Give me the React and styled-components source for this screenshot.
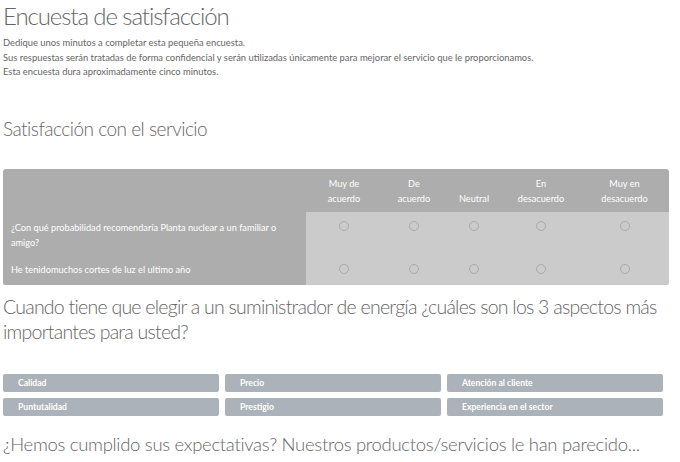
import React from "react";
import styled, { createGlobalStyle } from "styled-components";

const Global = createGlobalStyle`
  html, body { margin: 0; padding: 0; background: #fff; }
  body { font-family: Lato, "Open Sans", sans-serif; color: #666; }
`;

const Page = styled.div`
  padding: 0 3px;
  width: 666px;
`;

const Title = styled.h1`
  margin: 0;
  padding-top: 2px;
  font-family: Lato, sans-serif;
  font-weight: 300;
  font-size: 24px;
  letter-spacing: -1.1px;
  line-height: 28px;
  color: #666;
`;

const Intro = styled.div`
  margin-top: 6px;
  font-size: 9.4px;
  line-height: 14.5px;
  color: #666;
`;

const SectionTitle = styled.h2`
  margin: 0;
  margin-top: ${(p) => p.$top || 0}px;
  font-family: Lato, sans-serif;
  font-weight: 300;
  font-size: ${(p) => p.$size || 20}px;
  letter-spacing: ${(p) => p.$ls || 0}px;
  line-height: 25px;
  color: #666;
`;

const Table = styled.table`
  margin-top: 28px;
  width: 666px;
  table-layout: fixed;
  border-collapse: separate;
  border-spacing: 0;
  background: #adadad;
  border-radius: 3px;
  overflow: hidden;
  font-size: 9.2px;
  color: #fff;
`;

const HeadCell = styled.th`
  font-weight: 400;
  line-height: 15px;
  padding: 6px 2px;
  height: 31px;
  text-align: center;
  vertical-align: bottom;
`;

const LabelCell = styled.td`
  text-align: left;
  padding: ${(p) => p.$pad || "6px 8px"};
  line-height: 15px;
  background: #adadad;
  vertical-align: top;
`;

const RadioCell = styled.td`
  background: #cbcbcb;
  text-align: center;
  vertical-align: top;
  padding: ${(p) => p.$pad || "9px 0"};
`;

const Radio = styled.span`
  display: inline-block;
  width: 10px;
  height: 10px;
  border: 1px solid #aaa;
  border-radius: 50%;
  box-sizing: border-box;
  vertical-align: top;
`;

const Options = styled.div`
  margin-top: 30px;
  display: grid;
  grid-template-columns: repeat(3, 216px);
  column-gap: 6px;
  row-gap: 6px;
`;

const Option = styled.div`
  height: 18px;
  background: #abb2b9;
  border-radius: 2px;
  color: #fff;
  font-weight: 700;
  font-size: 8.6px;
  line-height: 18px;
  padding-left: 15px;
`;

const labelWidth = 303;

const cols = [
  { l: ["Muy de", "acuerdo"], w: 76 },
  { l: ["De", "acuerdo"], w: 64 },
  { l: ["Neutral"], w: 56 },
  { l: ["En", "desacuerdo"], w: 78 },
  { l: ["Muy en", "desacuerdo"], w: 89 },
];

const rows = [
  { q: "¿Con qué probabilidad recomendaría Planta nuclear a un familiar o amigo?", pad: "8px 8px 6px", rpad: "9px 0 24px" },
  { q: "He tenidomuchos cortes de luz el ultimo año", pad: "6px 8px 8px", rpad: "8px 0 10px" },
];

const opts = [
  "Calidad",
  "Precio",
  "Atención al cliente",
  "Puntutalidad",
  "Prestigio",
  "Experiencia en el sector",
];

export default function App() {
  return (
    <>
      <Global />
      <Page>
        <Title>Encuesta de satisfacción</Title>
        <Intro>
          Dedique unos minutos a completar esta pequeña encuesta.
          <br />
          Sus respuestas serán tratadas de forma confidencial y serán utilizadas únicamente para mejorar el servicio que le proporcionamos.
          <br />
          Esta encuesta dura aproximadamente cinco minutos.
        </Intro>
        <SectionTitle $top={36} $size={19} $ls={-0.5}>Satisfacción con el servicio</SectionTitle>
        <Table>
          <colgroup>
            <col style={{ width: labelWidth }} />
            {cols.map((c, i) => (
              <col key={i} style={{ width: c.w }} />
            ))}
          </colgroup>
          <thead>
            <tr>
              <HeadCell />
              {cols.map((c, i) => (
                <HeadCell key={i}>
                  {c.l.map((t, j) => (
                    <React.Fragment key={j}>
                      {j > 0 && <br />}
                      {t}
                    </React.Fragment>
                  ))}
                </HeadCell>
              ))}
            </tr>
          </thead>
          <tbody>
            {rows.map((r, i) => (
              <tr key={i}>
                <LabelCell $pad={r.pad}>{r.q}</LabelCell>
                {cols.map((c, j) => (
                  <RadioCell key={j} $pad={r.rpad}>
                    <Radio />
                  </RadioCell>
                ))}
              </tr>
            ))}
          </tbody>
        </Table>
        <SectionTitle $top={9} $size={19.5} $ls={-0.75}>
          Cuando tiene que elegir a un suministrador de energía ¿cuáles son los 3 aspectos más importantes para usted?
        </SectionTitle>
        <Options>
          {opts.map((o) => (
            <Option key={o}>{o}</Option>
          ))}
        </Options>
        <SectionTitle $top={16} $size={18.5} $ls={-0.3}>
          ¿Hemos cumplido sus expectativas? Nuestros productos/servicios le han parecido...
        </SectionTitle>
      </Page>
    </>
  );
}
